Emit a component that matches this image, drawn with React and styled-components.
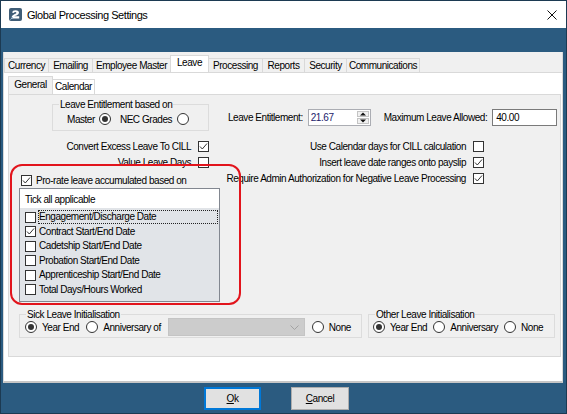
import React from "react";
import styled, { createGlobalStyle } from "styled-components";

const FONT = `"Liberation Sans", Arial, sans-serif`;

const GlobalStyle = createGlobalStyle`
  html, body { margin: 0; padding: 0; background: #2b5b80; }
  body { font-family: ${FONT}; font-size: 10px; letter-spacing: -0.45px; color: #000; }
  * { box-sizing: border-box; }
`;

const Window = styled.div`
  width: 567px;
  height: 414px;
  border: 1px solid #1c3a52;
  background-color: #2b5b80;
  display: flex;
  flex-direction: column;
  overflow: hidden;
`;

const TitleBar = styled.div`
  height: 51px;
  flex: none;
  background-color: #ffffff;
  border-bottom: 24px solid #2b5b80;
  display: flex;
  align-items: center;
  padding: 0 9px 0 8px;
  gap: 5px;
`;

const Title = styled.div`
  flex: 1;
  font-size: 11px;
  letter-spacing: -0.45px;
  color: #000;
`;

const Content = styled.div`
  height: 331px;
  flex: none;
  margin: 0 3px 0 2px;
  background: #fff;
  border-left: 1px solid #d9d9d9;
  border-right: 1px solid #d9d9d9;
  border-bottom: 2px solid #c6c6c6;
  display: flex;
  flex-direction: column;
`;

const TabStrip = styled.div`
  height: 20px;
  flex: none;
  background: #f0f0f0;
  display: flex;
  align-items: flex-end;
`;

const Tab = styled.div`
  width: ${(p) => p.$w}px;
  height: ${(p) => (p.$active ? 17 : 14)}px;
  margin-left: -1px;
  &:first-child { margin-left: 0; }
  border: 1px solid #d9d9d9;
  border-bottom: none;
  background: ${(p) => (p.$active ? "#fff" : "#f0f0f0")};
  position: relative;
  z-index: ${(p) => (p.$active ? 1 : 0)};
  display: flex;
  align-items: center;
  justify-content: center;
  white-space: nowrap;
  line-height: 12px;
  padding-bottom: ${(p) => (p.$active ? 2 : 0)}px;
`;

const OuterPage = styled.div`
  flex: 1;
  background: #fff;
  border-top: 1px solid #d9d9d9;
  padding: 3px 1px 0 4px;
  display: flex;
  flex-direction: column;
`;

const InnerTabStrip = styled.div`
  height: 18px;
  flex: none;
  display: flex;
  align-items: flex-end;
`;

const InnerTab = styled(Tab)`
  height: ${(p) => (p.$active ? 18 : 15)}px;
  background: ${(p) => (p.$active ? "#f0f0f0" : "#fff")};
  padding-bottom: ${(p) => (p.$active ? 1 : 0)}px;
`;

const Panel = styled.div`
  width: 553px;
  height: 263px;
  flex: none;
  background: #f0f0f0;
  border: 1px solid #d9d9d9;
  position: relative;
  display: flex;
  flex-direction: column;
`;

const TopArea = styled.div`
  display: flex;
`;

const LeftCol = styled.div`
  width: 211px;
  flex: none;
  display: flex;
  flex-direction: column;
  padding-top: 3px;
`;

const RightCol = styled.div`
  flex: 1;
  display: flex;
  flex-direction: column;
  padding-top: 14px;
`;

const GroupBox = styled.fieldset`
  margin: 0;
  padding: 0 0 ${(p) => p.$pb ?? 3}px 0;
  border: 1px solid #dcdcdc;
  width: ${(p) => p.$w}px;
  min-width: 0;
  flex: none;
  align-self: ${(p) => p.$align || "auto"};
  margin-right: ${(p) => p.$mr || 0}px;
`;

const Legend = styled.legend`
  margin-left: 6px;
  padding: 0 1px;
  line-height: 13px;
  font-size: 10px;
`;

const GroupRow = styled.div`
  height: ${(p) => p.$h || 16}px;
  margin-top: ${(p) => p.$mt || 0}px;
  display: flex;
  align-items: center;
  padding-left: ${(p) => p.$pl || 0}px;
  gap: ${(p) => p.$gap || 0}px;
  white-space: nowrap;
`;

const Pair = styled.div`
  display: flex;
  align-items: center;
  gap: ${(p) => p.$gap || 4}px;
  white-space: nowrap;
`;

const CheckStack = styled.div`
  display: flex;
  flex-direction: column;
  align-items: flex-end;
  align-self: ${(p) => p.$align || "auto"};
  width: ${(p) => (p.$w ? p.$w + "px" : "auto")};
  margin-top: ${(p) => p.$mt || 0}px;
  margin-right: ${(p) => p.$mr || 0}px;
`;

const CheckRow = styled.div`
  height: 16px;
  display: flex;
  align-items: center;
  gap: 7px;
  white-space: nowrap;
`;

const Box = styled.span`
  width: 11px;
  height: 11px;
  flex: none;
  border: 1px solid #333;
  background: #fff;
  display: inline-flex;
  align-items: center;
  justify-content: center;
`;

const Circle = styled.span`
  width: 12px;
  height: 12px;
  flex: none;
  border-radius: 50%;
  border: 1px solid #333;
  background: #fff;
  display: inline-flex;
  align-items: center;
  justify-content: center;
  &::after {
    content: "";
    width: 6px;
    height: 6px;
    border-radius: 50%;
    background: ${(p) => (p.$on ? "#333" : "transparent")};
  }
`;

const Check = ({ on }) => (
  <Box>
    {on && (
      <svg width="9" height="9" viewBox="0 0 9 9">
        <polyline points="1,4.5 3.3,7 8,1.5" fill="none" stroke="#333" strokeWidth="1" />
      </svg>
    )}
  </Box>
);

const ProRateRow = styled.div`
  height: 15px;
  margin-top: 3px;
  margin-left: 12px;
  display: flex;
  align-items: center;
  gap: 4px;
  white-space: nowrap;
`;

const ListBox = styled.div`
  width: 201px;
  height: 114px;
  margin-left: 10px;
  border: 1px solid #828790;
  display: flex;
  flex-direction: column;
`;

const ListHeader = styled.div`
  height: 19px;
  flex: none;
  background: #fff;
  padding: 2px 0 0 5px;
  display: flex;
  align-items: center;
`;

const ListBody = styled.div`
  flex: 1;
  background: #e1e4e8;
  padding-top: 2px;
`;

const ListItem = styled.div`
  height: 14.5px;
  display: flex;
  align-items: center;
  padding-left: 5px;
  white-space: nowrap;
`;

const ItemLabel = styled.span`
  flex: 1;
  margin: 0 1px 0 2px;
  height: 14px;
  line-height: 12px;
  border: 1px dotted ${(p) => (p.$focus ? "#222" : "transparent")};
`;

const FieldRow = styled.div`
  height: 17px;
  display: flex;
  align-items: center;
  padding-left: 8px;
  white-space: nowrap;
`;

const FieldLabel = styled.span`
  margin-left: ${(p) => p.$ml || 0}px;
  margin-right: 5px;
`;

const UpDown = styled.div`
  width: 63px;
  height: 17px;
  border: 1px solid #abadb3;
  background: #fff;
  display: flex;
  padding: 0 1px 0 2px;
`;

const UpDownValue = styled.span`
  flex: 1;
  line-height: 15px;
  color: #1c1c6b;
`;

const SpinCol = styled.div`
  width: 12px;
  display: flex;
  flex-direction: column;
  padding: 1px 0;
  gap: 1px;
`;

const SpinBtn = styled.div`
  flex: 1;
  background: #f0f0f0;
  border: 1px solid #c4c4c4;
  display: flex;
  align-items: center;
  justify-content: center;
`;

const TextBox = styled.div`
  width: 65px;
  height: 17px;
  border: 1px solid #7a7a7a;
  background: #fff;
  padding-left: 3px;
  line-height: 15px;
`;

const BottomArea = styled.div`
  display: flex;
  gap: 6px;
  padding-left: 10px;
  margin-top: 6px;
`;

const Combo = styled.div`
  width: 137px;
  height: 18px;
  flex: none;
  background: #cccccc;
  border: 1px solid #c4c4c4;
  display: flex;
  align-items: center;
  justify-content: flex-end;
  padding-right: 5px;
`;

const RedMark = styled.div`
  position: absolute;
  left: 1px;
  top: 69px;
  width: 231px;
  height: 141px;
  border: 2px solid #e2141c;
  border-radius: 12px;
  pointer-events: none;
`;

const Footer = styled.div`
  flex: 1;
  display: flex;
  align-items: flex-start;
  padding: 4px 0 0 203px;
  gap: 30px;
  background-color: #2b5b80;
`;

const Button = styled.div`
  width: ${(p) => p.$w}px;
  height: 23px;
  background: #e1e1e1;
  border: 1px solid ${(p) => (p.$default ? "#0078d7" : "#adadad")};
  box-shadow: ${(p) => (p.$default ? "inset 0 0 0 1px #0078d7" : "none")};
  display: flex;
  align-items: center;
  justify-content: center;
`;

const RadioItem = ({ on, children, gap = 5 }) => (
  <Pair $gap={gap}>
    <Circle $on={on} />
    <span>{children}</span>
  </Pair>
);

const AppIcon = () => (
  <svg width="13" height="13" viewBox="0 0 13 13">
    <rect x="0" y="0" width="13" height="13" rx="2" fill="#3f5d77" />
    <path d="M3 4.5 Q3.5 2.3 6.5 2.3 Q10 2.3 10 4.8 Q10 6.6 7.5 7.4 L5.2 8.3 L10.2 8.3 L10.2 10.6 L2.8 10.6 L2.8 8.6 Q3 7.3 5.3 6.2 L7 5.4 Q7.6 5 7.3 4.4 Q6.9 3.9 6 4.1 Q5.2 4.3 5 5 Z" fill="#fff" />
    <path d="M1.5 11.5 L4 9" stroke="#9fc0dc" strokeWidth="1" />
  </svg>
);

const CloseIcon = () => (
  <svg width="10" height="10" viewBox="0 0 10 10">
    <path d="M0.5 0.5 L9.5 9.5 M9.5 0.5 L0.5 9.5" stroke="#111" strokeWidth="1" />
  </svg>
);

const Arrow = ({ up }) => (
  <svg width="6" height="4" viewBox="0 0 6 4">
    <polygon points={up ? "0,3.5 3,0.5 6,3.5" : "0,0.5 3,3.5 6,0.5"} fill="#111" />
  </svg>
);

const Chevron = () => (
  <svg width="9" height="5" viewBox="0 0 9 5">
    <polyline points="0.5,0.5 4.5,4.5 8.5,0.5" fill="none" stroke="#a3a3a3" strokeWidth="1" />
  </svg>
);

const outerTabs = [
  ["Currency", 45],
  ["Emailing", 45],
  ["Employee Master", 79],
  ["Leave", 39, true],
  ["Processing", 55],
  ["Reports", 43],
  ["Security", 43],
  ["Communications", 74],
];

const listItems = [
  ["Engagement/Discharge Date", false, true],
  ["Contract Start/End Date", true],
  ["Cadetship Start/End Date", false],
  ["Probation Start/End Date", false],
  ["Apprenticeship Start/End Date", false],
  ["Total Days/Hours Worked", false],
];

export default function App() {
  return (
    <>
      <GlobalStyle />
      <Window>
        <TitleBar>
          <AppIcon />
          <Title>Global Processing Settings</Title>
          <CloseIcon />
        </TitleBar>
        <Content>
          <TabStrip>
            {outerTabs.map(([t, w, a]) => (
              <Tab key={t} $w={w} $active={a}>
                {t}
              </Tab>
            ))}
          </TabStrip>
          <OuterPage>
            <InnerTabStrip>
              <InnerTab $w={45} $active>
                General
              </InnerTab>
              <InnerTab $w={43}>Calendar</InnerTab>
            </InnerTabStrip>
            <Panel>
              <TopArea>
                <LeftCol>
                  <GroupBox $w={157} $align="flex-end" $mr={11}>
                    <Legend>Leave Entitlement based on</Legend>
                    <GroupRow $pl={14} $gap={9}>
                      <Pair $gap={4}>
                        <span>Master</span>
                        <Circle $on />
                      </Pair>
                      <Pair $gap={5}>
                        <span>NEC Grades</span>
                        <Circle />
                      </Pair>
                    </GroupRow>
                  </GroupBox>
                  <CheckStack $align="flex-end" $mr={11} $mt={7}>
                    <CheckRow>
                      <span>Convert Excess Leave To CILL</span>
                      <Check on />
                    </CheckRow>
                    <CheckRow>
                      <span>Value Leave Days</span>
                      <Check />
                    </CheckRow>
                  </CheckStack>
                  <ProRateRow>
                    <Check on />
                    <span>Pro-rate leave accumulated based on</span>
                  </ProRateRow>
                  <ListBox>
                    <ListHeader>Tick all applicable</ListHeader>
                    <ListBody>
                      {listItems.map(([t, on, focus]) => (
                        <ListItem key={t}>
                          <Check on={on} />
                          <ItemLabel $focus={focus}>{t}</ItemLabel>
                        </ListItem>
                      ))}
                    </ListBody>
                  </ListBox>
                </LeftCol>
                <RightCol>
                  <FieldRow>
                    <FieldLabel>Leave Entitlement:</FieldLabel>
                    <UpDown>
                      <UpDownValue>21.67</UpDownValue>
                      <SpinCol>
                        <SpinBtn>
                          <Arrow up />
                        </SpinBtn>
                        <SpinBtn>
                          <Arrow />
                        </SpinBtn>
                      </SpinCol>
                    </UpDown>
                    <FieldLabel $ml={13}>Maximum Leave Allowed:</FieldLabel>
                    <TextBox>40.00</TextBox>
                  </FieldRow>
                  <CheckStack $w={264} $mt={12}>
                    <CheckRow>
                      <span>Use Calendar days for CILL calculation</span>
                      <Check />
                    </CheckRow>
                    <CheckRow>
                      <span>Insert leave date ranges onto payslip</span>
                      <Check on />
                    </CheckRow>
                    <CheckRow>
                      <span>Require Admin Authorization for Negative Leave Processing</span>
                      <Check on />
                    </CheckRow>
                  </CheckStack>
                </RightCol>
              </TopArea>
              <BottomArea>
                <GroupBox $w={343} $pb={1}>
                  <Legend>Sick Leave Initialisation</Legend>
                  <GroupRow $h={18} $mt={-3} $pl={5} $gap={7}>
                    <RadioItem on>Year End</RadioItem>
                    <RadioItem>Anniversary of</RadioItem>
                    <Combo>
                      <Chevron />
                    </Combo>
                    <RadioItem>None</RadioItem>
                  </GroupRow>
                </GroupBox>
                <GroupBox $w={187} $pb={1}>
                  <Legend>Other Leave Initialisation</Legend>
                  <GroupRow $h={18} $mt={-3} $pl={4} $gap={6}>
                    <RadioItem on>Year End</RadioItem>
                    <RadioItem>Anniversary</RadioItem>
                    <RadioItem>None</RadioItem>
                  </GroupRow>
                </GroupBox>
              </BottomArea>
              <RedMark />
            </Panel>
          </OuterPage>
        </Content>
        <Footer>
          <Button $w={57} $default>
            <span>
              <u>O</u>k
            </span>
          </Button>
          <Button $w={58}>
            <span>
              <u>C</u>ancel
            </span>
          </Button>
        </Footer>
      </Window>
    </>
  );
}
